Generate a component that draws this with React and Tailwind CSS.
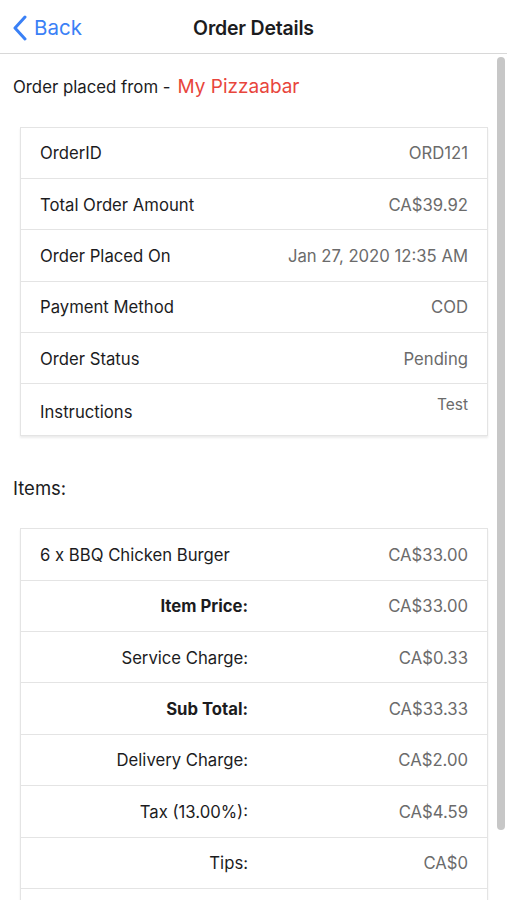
import React from "react";

const orderRows = [
    { label: "OrderID", value: "ORD121" },
    { label: "Total Order Amount", value: "CA$39.92" },
    { label: "Order Placed On", value: "Jan 27, 2020 12:35 AM" },
    { label: "Payment Method", value: "COD" },
    { label: "Order Status", value: "Pending" },
];

const summaryRows = [
    { label: "Item Price:", value: "CA$33.00", bold: true },
    { label: "Service Charge:", value: "CA$0.33" },
    { label: "Sub Total:", value: "CA$33.33", bold: true },
    { label: "Delivery Charge:", value: "CA$2.00" },
    { label: "Tax (13.00%):", value: "CA$4.59" },
    { label: "Tips:", value: "CA$0" },
    { label: "Total:", value: "CA$39.92", bold: true },
];

export default function App() {
    return (
        <div className="w-[507px] h-[900px] overflow-hidden bg-white text-[#1c1c1e] flex flex-col" style={{ fontFamily: "Inter, 'Liberation Sans', sans-serif" }}>
            {/* Nav bar */}
            <header className="h-[54px] shrink-0 border-b border-[#d8d8d8] flex items-center relative">
                <button className="absolute left-[12px] top-[15px] flex items-center gap-[6px] text-[#3a80f6]">
                    <svg width="16" height="26" viewBox="0 0 16 26" fill="none">
                        <path d="M13 2L3 13l10 11" stroke="#3a80f6" strokeWidth="3" strokeLinecap="round" strokeLinejoin="round" />
                    </svg>
                    <span className="text-[20.5px] leading-none">Back</span>
                </button>
                <h1 className="w-full text-center text-[19.5px] font-semibold tracking-[-0.2px] pt-[4px]">Order Details</h1>
            </header>

            {/* Content */}
            <main className="flex-1 relative overflow-hidden">
                {/* scroll indicator */}
                <div className="absolute right-[2px] top-[3px] w-[8px] h-[773px] rounded-full bg-[#c7c7c7]"></div>

                <p className="px-[13px] pt-[19px] text-[16.8px] flex items-baseline gap-[7px]">
                    Order placed from -
                    <span className="text-[#e8453c] text-[19px]">My Pizzaabar</span>
                </p>

                <div className="mx-[20px] mt-[25px] w-[468px] border border-[#e4e4e4] shadow-[0_2px_2px_rgba(0,0,0,0.08)]">
                    {orderRows.map((r) => (
                        <div key={r.label} className="h-[51.4px] flex items-center justify-between px-[19px] pt-[2px] border-b border-[#e4e4e4] text-[16.7px]">
                            <span className="text-[#1c1c1e]">{r.label}</span>
                            <span className="text-[#6b6b6b]">{r.value}</span>
                        </div>
                    ))}
                    <div className="h-[51px] flex justify-between px-[19px] text-[16.7px]">
                        <span className="self-center pt-[5px]">Instructions</span>
                        <span className="text-[#6b6b6b] text-[15.5px] pt-[9px]">Test</span>
                    </div>
                </div>

                <h2 className="px-[13px] mt-[39px] text-[18.5px]">Items:</h2>

                <div className="mx-[20px] mt-[25px] w-[468px] border border-[#e4e4e4] shadow-[0_2px_2px_rgba(0,0,0,0.08)]">
                    <div className="h-[51.4px] flex items-center justify-between px-[19px] pt-[2px] border-b border-[#e4e4e4] text-[16.7px]">
                        <span>6 x BBQ Chicken Burger</span>
                        <span className="text-[#6b6b6b]">CA$33.00</span>
                    </div>
                    {summaryRows.map((r) => (
                        <div key={r.label} className="h-[51.4px] grid grid-cols-[227px_1fr] items-center pr-[19px] pt-[2px] border-b border-[#e4e4e4] text-[16.7px]">
                            <span className={`text-right ${r.bold ? "font-bold" : ""}`}>{r.label}</span>
                            <span className="text-right text-[#6b6b6b]">{r.value}</span>
                        </div>
                    ))}
                </div>
            </main>
        </div>
    );
}
